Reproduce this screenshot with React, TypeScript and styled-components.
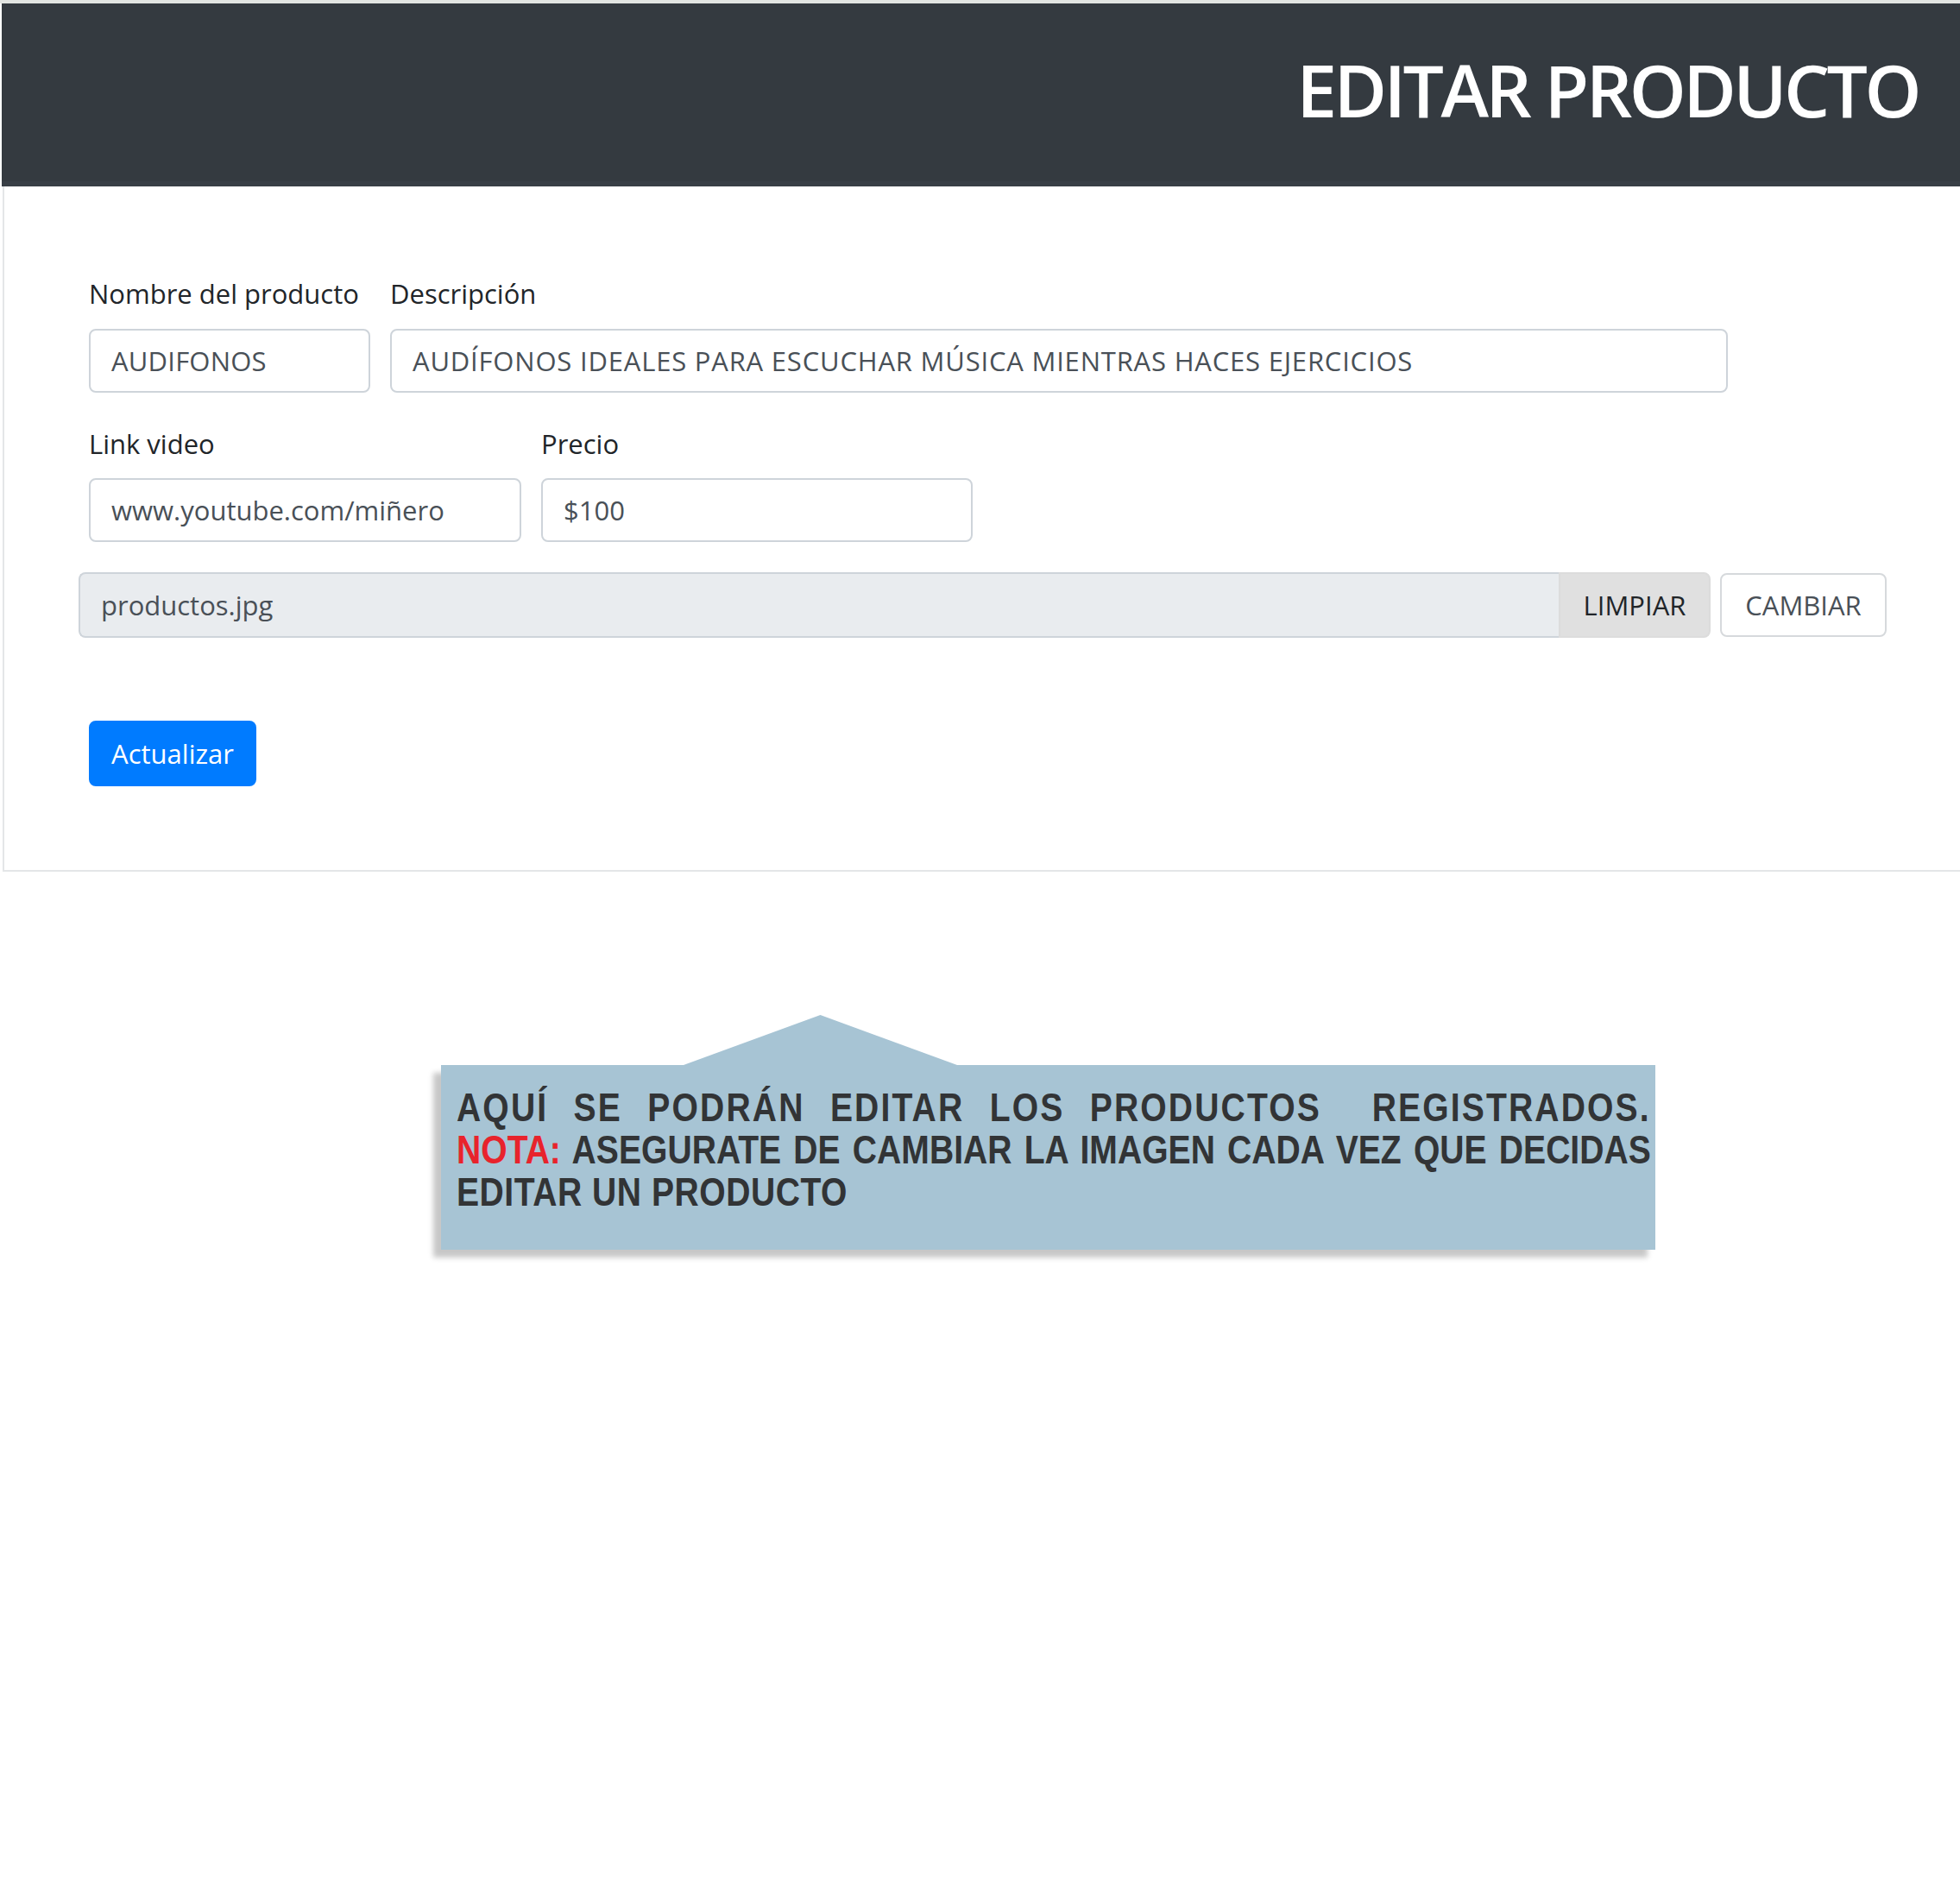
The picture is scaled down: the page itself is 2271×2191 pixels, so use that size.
import styled, { createGlobalStyle } from 'styled-components';

const GlobalStyle = createGlobalStyle`
  html, body {
    margin: 0;
    padding: 0;
    background-color: #fff;
  }

  * {
    box-sizing: border-box;
  }
`;

const Page = styled.div`
  min-height: 2191px;
  border-top: 4px solid #e2e5e2;
  font-family: 'Open Sans', 'Noto Sans', sans-serif;
`;

const Header = styled.header`
  display: flex;
  justify-content: flex-end;
  align-items: flex-start;
  height: 212px;
  margin-left: 2px;
  padding: 58px 48px 0 0;
  background-color: #343a40;
  border-bottom: 6px solid #383e45;
`;

const Title = styled.h1`
  margin: 0;
  font-size: 84px;
  font-weight: 600;
  line-height: 1;
  letter-spacing: -3.6px;
  color: #fff;
`;

const Card = styled.section`
  margin-left: 3px;
  padding: 101px 0 97px 98px;
  background-color: #fff;
  border-left: 2px solid #e4e6e8;
  border-bottom: 2px solid #e4e6e8;
`;

const Row = styled.div<{ $cols: string }>`
  display: grid;
  grid-template-columns: ${({ $cols }) => $cols};
  column-gap: 23px;
  margin-bottom: 36px;
`;

const Field = styled.div`
  display: flex;
  flex-direction: column;
`;

const Label = styled.label`
  margin-bottom: 17px;
  font-size: 31px;
  line-height: 1.5;
  color: #212529;
`;

const Input = styled.div<{ $tracking?: number }>`
  display: flex;
  align-items: center;
  height: 74px;
  padding: 0 24px;
  font-size: 31px;
  letter-spacing: ${({ $tracking = 0 }) => $tracking}px;
  color: #495057;
  background-color: #fff;
  border: 2px solid #ced4da;
  border-radius: 8px;
  white-space: nowrap;
`;

const FileRow = styled.div`
  display: flex;
  align-items: center;
  gap: 11px;
  margin: -1px 0 0 -12px;
`;

const FileGroup = styled.div`
  display: flex;
  width: 1891px;
  height: 76px;
`;

const FileName = styled.div`
  flex: 1;
  display: flex;
  align-items: center;
  padding: 0 24px;
  font-size: 31px;
  color: #495057;
  background-color: #e9ecef;
  border: 2px solid #ced4da;
  border-right: none;
  border-radius: 8px 0 0 8px;
`;

const GroupButton = styled.button`
  width: 176px;
  height: 76px;
  padding: 0;
  font-family: inherit;
  font-size: 31px;
  color: #212529;
  background-color: #e0e0e0;
  border: 2px solid #dcdcdc;
  border-radius: 0 8px 8px 0;
`;

const OutlineButton = styled.button`
  width: 193px;
  height: 74px;
  padding: 0;
  font-family: inherit;
  font-size: 31px;
  color: #495057;
  background-color: #fff;
  border: 2px solid #d6d9dc;
  border-radius: 8px;
`;

const PrimaryButton = styled.button`
  display: block;
  width: 194px;
  height: 76px;
  margin-top: 96px;
  padding: 0;
  font-family: inherit;
  font-size: 31px;
  color: #fff;
  background-color: #007bff;
  border: 2px solid #007bff;
  border-radius: 8px;
`;

const Callout = styled.div`
  width: 1407px;
  margin: 166px 0 0 511px;
`;

const Pointer = styled.div`
  width: 317px;
  height: 58px;
  margin-left: 281px;
  background-color: #a7c4d4;
  clip-path: polygon(0 100%, 50% 0, 100% 100%);
`;

const CalloutBox = styled.div`
  height: 214px;
  padding: 25px 5px 0 18px;
  background-color: #a7c4d4;
  box-shadow: -9px 9px 6px rgba(0, 0, 0, 0.22);
`;

/* the note is set in a condensed bold face: scale Arial metrics down horizontally */
const CalloutText = styled.div`
  width: 1628px;
  transform: scaleX(0.85);
  transform-origin: left top;
  font-family: 'Liberation Sans', Arial, sans-serif;
  font-weight: 700;
  font-size: 46px;
  line-height: 49px;
  color: #323436;
`;

const CalloutLine = styled.div<{ $justify?: boolean; $tracking?: number }>`
  white-space: pre-wrap;
  letter-spacing: ${({ $tracking = 0 }) => $tracking}px;
  text-align: ${({ $justify }) => ($justify ? 'justify' : 'left')};
  text-align-last: ${({ $justify }) => ($justify ? 'justify' : 'left')};
`;

const Note = styled.span`
  color: #e8232c;
`;

const App = () => {
  return (
    <Page>
      <GlobalStyle />
      <Header>
        <Title>EDITAR PRODUCTO</Title>
      </Header>
      <Card>
        <Row $cols="326px 1550px">
          <Field>
            <Label>Nombre del producto</Label>
            <Input $tracking={0.2}>AUDIFONOS</Input>
          </Field>
          <Field>
            <Label>Descripción</Label>
            <Input $tracking={0.8}>AUDÍFONOS IDEALES PARA ESCUCHAR MÚSICA MIENTRAS HACES EJERCICIOS</Input>
          </Field>
        </Row>
        <Row $cols="501px 500px">
          <Field>
            <Label>Link video</Label>
            <Input>www.youtube.com/miñero</Input>
          </Field>
          <Field>
            <Label>Precio</Label>
            <Input>$100</Input>
          </Field>
        </Row>
        <FileRow>
          <FileGroup>
            <FileName>productos.jpg</FileName>
            <GroupButton>LIMPIAR</GroupButton>
          </FileGroup>
          <OutlineButton>CAMBIAR</OutlineButton>
        </FileRow>
        <PrimaryButton>Actualizar</PrimaryButton>
      </Card>
      <Callout>
        <Pointer />
        <CalloutBox>
          <CalloutText>
            <CalloutLine $justify $tracking={2.5}>
              AQUÍ SE PODRÁN EDITAR LOS PRODUCTOS  REGISTRADOS.
            </CalloutLine>
            <CalloutLine $justify>
              <Note>NOTA:</Note> ASEGURATE DE CAMBIAR LA IMAGEN CADA VEZ QUE DECIDAS
            </CalloutLine>
            <CalloutLine $tracking={0.6}>EDITAR UN PRODUCTO</CalloutLine>
          </CalloutText>
        </CalloutBox>
      </Callout>
    </Page>
  );
};

export default App;
